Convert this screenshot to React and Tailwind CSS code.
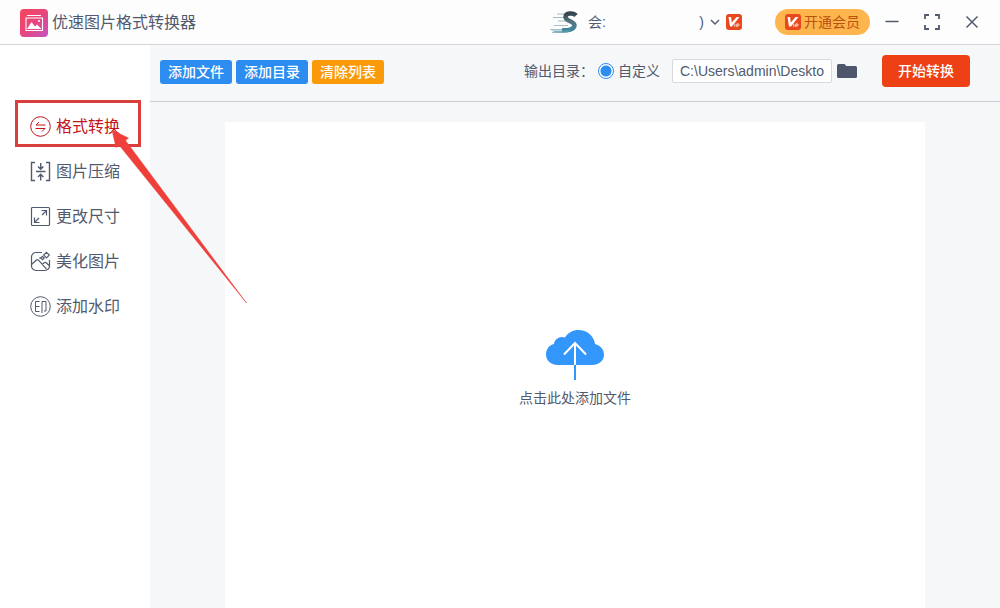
import React, { useState } from "react";

function VipBadge() {
  return (
    <svg className="h-4 w-4 shrink-0" viewBox="0 0 16 16" aria-hidden="true">
      <rect width="16" height="16" rx="3" fill="#e9481c" />
      <path d="M2.500 3h2.600l.7 5.600L10.600 3h2.900L6 12.500H4Z" fill="#fff" />
      <path d="M8.800 9.800v3.200M10.800 13.200V9.900h1.400a.9.9 0 0 1 0 1.900h-1.400" fill="none" stroke="#fff" strokeWidth="0.8" />
    </svg>
  );
}

function AppLogo() {
  return (
    <svg className="h-7 w-7 shrink-0" viewBox="0 0 28 28" aria-hidden="true">
      <defs>
        <linearGradient id="logoFill" x1="0" y1="0" x2="1" y2="1">
          <stop offset="0" stopColor="#f4475c" />
          <stop offset="0.5" stopColor="#e8457c" />
          <stop offset="1" stopColor="#c455c4" />
        </linearGradient>
      </defs>
      <rect width="28" height="28" rx="4" fill="url(#logoFill)" />
      <path d="M7 6.500h14M6 9h16.500v12.500H6Z" fill="none" stroke="#fff" strokeWidth="1.100" />
      <path d="M7 20l4.500-7 3.500 4.500 2-2 4.500 4.500Z" fill="#fff" />
      <circle cx="19" cy="12" r="1.100" fill="#fff" />
    </svg>
  );
}

function Avatar() {
  return (
    <svg className="h-6 w-8 shrink-0" viewBox="0 0 32 24" aria-hidden="true">
      <defs>
        <linearGradient id="avatarFill" x1="0" y1="0" x2="0" y2="1">
          <stop offset="0" stopColor="#35434f" />
          <stop offset="0.5" stopColor="#567582" />
          <stop offset="1" stopColor="#3d8799" />
        </linearGradient>
      </defs>
      <path d="M8 4h12M4 7.500h13M9 11h12M5 15.500h14M1 19.500h18M3 22.500h12" stroke="#9cb4bf" strokeWidth="0.9" fill="none" />
      <path d="M27 5.500C24.500 2.500 16.500 2.500 16.500 7c0 4.500 9.500 4 9 8.500-.5 4-7 5.500-12.500 4.500" fill="none" stroke="url(#avatarFill)" strokeWidth="4.500" />
      <path d="M2 20.500h14l5-1-2 3H7Z" fill="#629eab" opacity="0.8" />
    </svg>
  );
}

const lineIcon = {
  className: "h-[22px] w-[22px] shrink-0",
  viewBox: "0 0 22 22",
  fill: "none",
  stroke: "currentColor",
  strokeWidth: 1,
  "aria-hidden": true,
};

const icons = {
  convert: (
    <svg {...lineIcon}>
      <circle cx="10.500" cy="10.500" r="9.800" />
      <path d="M15.500 9H6L9 6M5.500 12.500H15L12 15.500" />
    </svg>
  ),
  compress: (
    <svg {...lineIcon} strokeWidth={1.4}>
      <path d="M5 1.500H1.500v18H5M16 1.500h3.500v18H16M6 10.500h9.500M10.700 2v6M8 5.500l2.700 2.700 2.700-2.700M10.700 19.500v-6M8 16l2.700-2.700 2.700 2.700" />
    </svg>
  ),
  resize: (
    <svg {...lineIcon} strokeWidth={1.2}>
      <rect x="1.500" y="1.500" width="18" height="18" rx="1" />
      <path d="M12 9l4.500-4.500M11.500 4.500h5v5M9 12l-4.500 4.500M4.500 11.500v5h5" />
    </svg>
  ),
  beautify: (
    <svg {...lineIcon} strokeWidth={1.2}>
      <path d="M12 1.500H6A4.500 4.500 0 0 0 1.500 6v9A4.500 4.500 0 0 0 6 19.500h9a4.500 4.500 0 0 0 4.500-4.500V9" />
      <path d="M1.500 13.500L6.500 9q1-.8 2 .2l8 9M12 13.500l2.500-2q.8-.5 1.600.2l3.400 3" />
      <path d="M16.500 1.300l2.800 2.800-2.800 2.800-2.800-2.800ZM12.500 5.300l1.700 1.700-1.700 1.700-1.700-1.700ZM9.500 6.500l1 1" />
    </svg>
  ),
  watermark: (
    <svg {...lineIcon}>
      <circle cx="10.500" cy="10.500" r="9.800" />
      <path d="M9.500 5.500h-4v10h4M5.500 10.500h4M12 17V5.500h4v9.500h-2" />
    </svg>
  ),
};

const items = [
  { id: "convert", label: "格式转换" },
  { id: "compress", label: "图片压缩" },
  { id: "resize", label: "更改尺寸" },
  { id: "beautify", label: "美化图片" },
  { id: "watermark", label: "添加水印" },
];

function TitleBar() {
  return (
    <header className="flex h-[45px] shrink-0 items-center border-b border-[#d3d5da] bg-[#fdfdfe] pr-[18px] pl-5">
      <div className="flex items-center gap-1 pt-[2px]">
        <AppLogo />
        <h1 className="text-base">优速图片格式转换器</h1>
      </div>
      <div className="ml-auto flex items-center">
        <Avatar />
        <span className="ml-[7px] flex w-[116px] items-center justify-between text-sm">
          <span>会:</span>
          <span>)</span>
        </span>
        <button type="button" aria-label="账户菜单" className="ml-[3px] flex h-4 w-4 items-center justify-center">
          <svg className="h-3 w-3" viewBox="0 0 12 12" fill="none" stroke="currentColor" strokeWidth="1.4">
            <path d="M2 4l4 4 4-4" />
          </svg>
        </button>
        <span className="ml-[3px]"><VipBadge /></span>
        <button type="button" className="ml-[33px] flex h-[26px] items-center gap-[3px] rounded-full bg-[#ffb54d] px-[10px] text-sm text-[#b8520f]">
          <VipBadge />
          开通会员
        </button>
        <div className="ml-3 flex items-center gap-5">
          <button type="button" aria-label="最小化" className="flex h-5 w-5 items-center justify-center">
            <svg className="h-4 w-4" viewBox="0 0 16 16" fill="none" stroke="currentColor" strokeWidth="1.5">
              <path d="M1.500 7.500h13" />
            </svg>
          </button>
          <button type="button" aria-label="最大化" className="flex h-5 w-5 items-center justify-center">
            <svg className="h-4 w-4" viewBox="0 0 16 16" fill="none" stroke="currentColor" strokeWidth="1.8">
              <path d="M1 5V1h4M11 1h4v4M15 11v4h-4M5 15H1v-4" />
            </svg>
          </button>
          <button type="button" aria-label="关闭" className="flex h-5 w-5 items-center justify-center">
            <svg className="h-4 w-4" viewBox="0 0 16 16" fill="none" stroke="currentColor" strokeWidth="1.5">
              <path d="M2.500 2.500l11 11M13.500 2.500l-11 11" />
            </svg>
          </button>
        </div>
      </div>
    </header>
  );
}

function Sidebar() {
  const [active, setActive] = useState("convert");
  return (
    <nav className="relative w-[150px] shrink-0 bg-white pt-[59px]">
      <ul>
        {items.map((item) => (
          <li key={item.id}>
            <button
              type="button"
              onClick={() => setActive(item.id)}
              className={
                item.id === active
                  ? "flex h-[45px] w-full items-center gap-1 pl-[30px] text-base text-[#c4141c]"
                  : "flex h-[45px] w-full items-center gap-1 pl-[30px] text-base"
              }
            >
              {icons[item.id]}
              {item.label}
            </button>
          </li>
        ))}
      </ul>
      <div className="pointer-events-none absolute top-[55px] left-[15px] h-[47px] w-[126px] border-3 border-[#d9403d]" />
      <svg className="pointer-events-none absolute top-[84px] left-[111px] z-10 h-[176px] w-[138px]" viewBox="0 0 138 176" aria-hidden="true">
        <path d="M1 1L17.500 9 14.500 11.500 135.500 174 8 16 5 18.500Z" fill="#ee3f3b" stroke="#ee3f3b" strokeWidth="0.5" />
      </svg>
    </nav>
  );
}

function Toolbar() {
  return (
    <div className="flex h-[57px] shrink-0 items-center border-b border-[#cbcdd4] pr-[30px] pb-1 pl-[10px] text-sm">
      <div className="flex gap-1 pt-px font-medium text-white">
        <button type="button" className="h-6 rounded-[3px] bg-[#2d8cf0] px-2">添加文件</button>
        <button type="button" className="h-6 rounded-[3px] bg-[#2d8cf0] px-2">添加目录</button>
        <button type="button" className="h-6 rounded-[3px] bg-[#fb9a08] px-2">清除列表</button>
      </div>
      <div className="ml-auto flex items-center">
        <span>输出目录：</span>
        <label className="ml-1 flex items-center gap-1">
          <input
            type="radio"
            name="output"
            defaultChecked
            className="h-4 w-4 appearance-none rounded-full border border-[#2d8cf0] bg-white bg-[radial-gradient(circle,#2d8cf0_5px,transparent_6px)]"
          />
          自定义
        </label>
        <input
          type="text"
          aria-label="输出目录"
          defaultValue="C:\Users\admin\Deskto"
          className="ml-3 h-6 w-40 rounded-[2px] border border-[#d7dae0] bg-white px-[7px]"
        />
        <button type="button" aria-label="选择文件夹" className="ml-[5px]">
          <svg className="h-[14px] w-5" viewBox="0 0 20 14" fill="#4d566d">
            <path d="M0 1.500Q0 0 1.500 0H7q1 0 1.500 1l.5 1h9.500Q20 2 20 3.500v9q0 1.500-1.500 1.500h-17Q0 14 0 12.500Z" />
          </svg>
        </button>
        <button type="button" className="ml-[25px] h-8 rounded bg-[#ed4014] px-4 font-medium text-white">开始转换</button>
      </div>
    </div>
  );
}

function DropArea() {
  return (
    <button type="button" className="mx-[75px] mt-5 flex flex-1 flex-col items-center bg-white pt-[207px] text-sm">
      <svg className="h-[52px] w-[60px]" viewBox="0 0 60 52" aria-hidden="true">
        <path d="M13 36C6 36 1 31.500 1 25.500 1 20 4.500 16 9 15c.5-5 6-8.500 11-6.500C23 3.500 28 1 33.500 1 42 1 49 7 50 15c5.500 1.500 9 5.500 9 10.500C59 31.500 54 36 47 36Z" fill="#3296fa" />
        <path d="M30 14v22M19 25.500L30 14l11 11.500" fill="none" stroke="#fff" strokeWidth="2" />
        <path d="M30 36v15" stroke="#3296fa" strokeWidth="2" />
      </svg>
      <span className="mt-[7px]">点击此处添加文件</span>
    </button>
  );
}

export default function App() {
  return (
    <div className="flex min-h-screen flex-col bg-[#f5f7f9] font-['Liberation_Sans','Noto_Sans_CJK_SC',sans-serif] text-[#515a6e]">
      <TitleBar />
      <div className="flex flex-1">
        <Sidebar />
        <main className="flex min-w-0 flex-1 flex-col">
          <Toolbar />
          <DropArea />
        </main>
      </div>
    </div>
  );
}
